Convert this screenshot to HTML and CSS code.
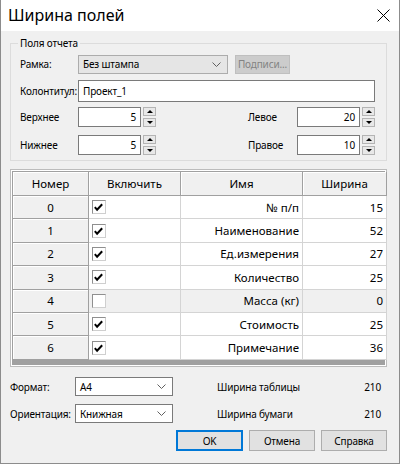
FILE: index.html
```html
<!DOCTYPE html>
<html lang="ru">

<head>
    <meta charset="UTF-8">
    <title>Ширина полей</title>

    <link rel="stylesheet" href="styles.css">
</head>

<body>
    <div class="dialog">
        <div class="titlebar">
            <span class="title">Ширина полей</span>
            <svg class="close" width="13" height="13" viewBox="0 0 13 13">
                <path d="M0.5 0.5L12.5 12.5M12.5 0.5L0.5 12.5" stroke="#000" stroke-width="1" fill="none" />
            </svg>
        </div>

        <div class="content">
            <fieldset class="group">
                <legend>Поля отчета</legend>

                <div class="row row-frame">
                    <span class="label">Рамка:</span>
                    <div class="combo combo-flat">
                        <span>Без штампа</span>
                        <svg class="chevron" width="9" height="5" viewBox="0 0 9 5">
                            <path d="M0.5 0.5L4.5 4.5L8.5 0.5" stroke="#606060" fill="none" />
                        </svg>
                    </div>
                    <div class="btn btn-disabled">Подписи...</div>
                </div>

                <div class="row row-footer">
                    <span class="label">Колонтитул:</span>
                    <div class="field field-wide">Проект_1</div>
                </div>

                <div class="row row-margin">
                    <div class="pair">
                        <span class="label">Верхнее</span>
                        <div class="field field-num">5</div>
                        <div class="spin"><span class="up"></span><span class="down"></span></div>
                    </div>
                    <div class="pair pair-right">
                        <span class="label label-short">Левое</span>
                        <div class="field field-num">20</div>
                        <div class="spin"><span class="up"></span><span class="down"></span></div>
                    </div>
                </div>

                <div class="row row-margin row-last">
                    <div class="pair">
                        <span class="label">Нижнее</span>
                        <div class="field field-num">5</div>
                        <div class="spin"><span class="up"></span><span class="down"></span></div>
                    </div>
                    <div class="pair pair-right">
                        <span class="label label-short">Правое</span>
                        <div class="field field-num">10</div>
                        <div class="spin"><span class="up"></span><span class="down"></span></div>
                    </div>
                </div>
            </fieldset>

            <div class="grid-wrap">
                <div class="grid-area">
                    <div class="grid">
                        <div class="head">Номер</div>
                        <div class="head">Включить</div>
                        <div class="head">Имя</div>
                        <div class="head">Ширина</div>

                        <div class="num">0</div>
                        <div class="cell"><span class="check"><svg viewBox="0 0 12 12"><path d="M2 5.5L4.5 8.5L10 2.5" /></svg></span></div>
                        <div class="cell right">№ п/п</div>
                        <div class="cell right">15</div>

                        <div class="num">1</div>
                        <div class="cell"><span class="check"><svg viewBox="0 0 12 12"><path d="M2 5.5L4.5 8.5L10 2.5" /></svg></span></div>
                        <div class="cell right">Наименование</div>
                        <div class="cell right">52</div>

                        <div class="num">2</div>
                        <div class="cell"><span class="check"><svg viewBox="0 0 12 12"><path d="M2 5.5L4.5 8.5L10 2.5" /></svg></span></div>
                        <div class="cell right">Ед.измерения</div>
                        <div class="cell right">27</div>

                        <div class="num">3</div>
                        <div class="cell"><span class="check"><svg viewBox="0 0 12 12"><path d="M2 5.5L4.5 8.5L10 2.5" /></svg></span></div>
                        <div class="cell right">Количество</div>
                        <div class="cell right">25</div>

                        <div class="num">4</div>
                        <div class="cell off"><span class="check"></span></div>
                        <div class="cell right off">Масса (кг)</div>
                        <div class="cell right off">0</div>

                        <div class="num">5</div>
                        <div class="cell"><span class="check"><svg viewBox="0 0 12 12"><path d="M2 5.5L4.5 8.5L10 2.5" /></svg></span></div>
                        <div class="cell right">Стоимость</div>
                        <div class="cell right">25</div>

                        <div class="num">6</div>
                        <div class="cell"><span class="check"><svg viewBox="0 0 12 12"><path d="M2 5.5L4.5 8.5L10 2.5" /></svg></span></div>
                        <div class="cell right">Примечание</div>
                        <div class="cell right">36</div>
                    </div>
                </div>
            </div>

            <div class="page-row">
                <span class="label label-page">Формат:</span>
                <div class="combo combo-white">
                    <span>A4</span>
                    <svg class="chevron" width="9" height="5" viewBox="0 0 9 5">
                        <path d="M0.5 0.5L4.5 4.5L8.5 0.5" stroke="#606060" fill="none" />
                    </svg>
                </div>
                <div class="info">
                    <span>Ширина таблицы</span>
                    <span>210</span>
                </div>
            </div>

            <div class="page-row page-row-2">
                <span class="label label-page">Ориентация:</span>
                <div class="combo combo-white">
                    <span>Книжная</span>
                    <svg class="chevron" width="9" height="5" viewBox="0 0 9 5">
                        <path d="M0.5 0.5L4.5 4.5L8.5 0.5" stroke="#606060" fill="none" />
                    </svg>
                </div>
                <div class="info">
                    <span>Ширина бумаги</span>
                    <span>210</span>
                </div>
            </div>

            <div class="buttons">
                <div class="btn btn-default">OK</div>
                <div class="btn">Отмена</div>
                <div class="btn">Справка</div>
            </div>
        </div>
    </div>
</body>

</html>
```

FILE: styles.css
```css
body {
    margin: 0;
    font-family: "Noto Sans", sans-serif;
    font-size: 10px;
    letter-spacing: -0.15px;
    color: #000;
    background-color: #f0f0f0;
}

.dialog {
    width: 400px;
    height: 464px;
    box-sizing: border-box;
    border: 1px solid #8c8c8c;
    border-top: none;
    background-color: #f0f0f0;
}

.titlebar {
    height: 31px;
    background-color: #fff;
    display: flex;
    align-items: center;
    justify-content: space-between;
    padding: 0 9px 0 7px;
}

.title {
    font-size: 16px;
    letter-spacing: 0;
    padding-bottom: 1px;
}

.content {
    padding: 0 12px 0 9px;
}

/* group box */
.group {
    margin: 5px 0 0 0;
    padding: 0 0 5px 9px;
    border: 1px solid #dcdcdc;
    min-width: 0;
}

.group legend {
    padding: 0 2px;
    margin-left: -2px;
    line-height: 15px;
}

.row {
    display: flex;
    align-items: center;
}

.label {
    width: 58px;
    flex-shrink: 0;
    white-space: nowrap;
}

.label-short {
    width: 49px;
}

.row-frame {
    height: 20px;
    margin-top: 3px;
}

.row-footer {
    height: 22px;
    margin-top: 6px;
}

.row-margin {
    height: 20px;
    margin-top: 5px;
}

.row-last {
    margin-top: 8px;
}

.pair {
    display: flex;
    align-items: center;
}

.pair-right {
    margin-left: 92px;
}

/* inputs */
.combo {
    box-sizing: border-box;
    display: flex;
    align-items: center;
    justify-content: space-between;
    padding: 0 6px 0 4px;
}

.combo-flat {
    width: 150px;
    height: 19px;
    background-color: #e5e5e5;
    border: 1px solid #acacac;
}

.combo-white {
    width: 98px;
    height: 19px;
    background-color: #fff;
    border: 1px solid #7a7a7a;
}

.field {
    box-sizing: border-box;
    background-color: #fff;
    border: 1px solid #7a7a7a;
    display: flex;
    align-items: center;
}

.field-wide {
    width: 297px;
    height: 22px;
    padding-left: 4px;
}

.field-num {
    width: 63px;
    height: 20px;
    justify-content: flex-end;
    padding-right: 4px;
}

.spin {
    margin-left: 2px;
    width: 13px;
    height: 20px;
    display: flex;
    flex-direction: column;
    justify-content: space-between;
}

.spin span {
    box-sizing: border-box;
    height: 9px;
    border: 1px solid #b4b4b4;
    background-color: #e8e8e8;
    position: relative;
}

.spin .up::after,
.spin .down::after {
    content: "";
    position: absolute;
    left: 3px;
    width: 0;
    height: 0;
    border-left: 3px solid transparent;
    border-right: 3px solid transparent;
}

.spin .up::after {
    top: 2px;
    border-bottom: 3px solid #000;
}

.spin .down::after {
    top: 2px;
    border-top: 3px solid #000;
}

/* buttons */
.btn {
    box-sizing: border-box;
    width: 66px;
    height: 21px;
    display: flex;
    align-items: center;
    justify-content: center;
    background-color: #e1e1e1;
    border: 1px solid #adadad;
}

.btn-disabled {
    width: 55px;
    height: 19px;
    margin-left: 7px;
    background-color: #cccccc;
    border-color: #bfbfbf;
    color: #838383;
}

.btn-default {
    width: 67px;
    border: 2px solid #0078d7;
}

/* table */
.grid-wrap {
    margin-top: 8px;
    border: 1px solid #bcbcbc;
    padding: 1px;
    background-color: #fff;
}

.grid-area {
    height: 194px;
    background-color: #a0a0a0;
}

.grid {
    display: grid;
    grid-template-columns: 76px 92px 122px 84px;
    grid-template-rows: 24px repeat(7, 23.4px);
    font-size: 11.5px;
    letter-spacing: 0;
    border-top: 1px solid #a0a0a0;
    border-left: 1px solid #a0a0a0;
}

.head,
.num {
    background-color: #f0f0f0;
    border-right: 1px solid #a0a0a0;
    border-bottom: 1px solid #a0a0a0;
    box-shadow: inset 1px 1px 0 #fff;
    display: flex;
    align-items: center;
    justify-content: center;
}

.cell {
    background-color: #fff;
    border-right: 1px solid #d4d4d4;
    border-bottom: 1px solid #d4d4d4;
    display: flex;
    align-items: center;
    padding: 0 3px;
}

.cell.right {
    justify-content: flex-end;
}

.cell.off {
    background-color: #f0f0f0;
}

.check {
    box-sizing: border-box;
    width: 14px;
    height: 14px;
    border: 1px solid #8f8f8f;
    border-right-color: #cfcfcf;
    border-bottom-color: #cfcfcf;
    background-color: #fff;
    display: flex;
    padding: 1px 0 0 0;
}

.check svg {
    width: 11px;
    height: 11px;
}

.check path {
    fill: none;
    stroke: #000;
    stroke-width: 2.2;
}

/* bottom */
.page-row {
    display: flex;
    align-items: center;
    height: 19px;
    margin-top: 10px;
}

.page-row-2 {
    margin-top: 8px;
}

.label-page {
    width: 65px;
}

.info {
    margin-left: 44px;
    width: 164px;
    display: flex;
    justify-content: space-between;
}

.buttons {
    display: flex;
    justify-content: flex-end;
    gap: 6px;
    margin-top: 7px;
}
```
